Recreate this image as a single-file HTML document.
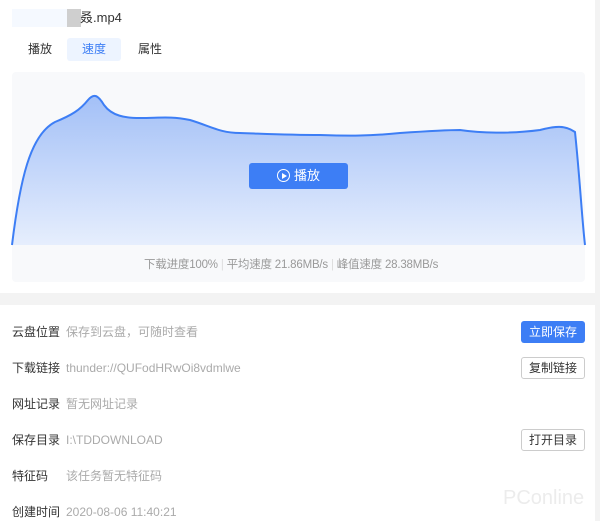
<!DOCTYPE html>
<html><head><meta charset="utf-8"><style>
body{margin:0;width:600px;height:521px;background:#f3f3f3;font-family:"Liberation Sans","Noto Sans CJK SC",sans-serif;overflow:hidden;position:relative}
.top{position:absolute;left:0;top:0;width:595px;height:293px;background:#fff}
.bot{position:absolute;left:0;top:305px;width:595px;height:216px;background:#fff}
.t{position:absolute;font-size:12px;white-space:nowrap;line-height:14px}
.btn{position:absolute;font-size:12px;text-align:center;border-radius:3px;box-sizing:border-box}
</style></head><body>
<div class="top">
<div style="position:absolute;left:12px;top:9px;width:55px;height:18px;background:#f5f9ff"></div>
<div style="position:absolute;left:67px;top:9px;width:14px;height:18px;background:#cfcfcf"></div>
<div class="t" style="left:80px;top:11px;color:#333;font-size:13px">叒.mp4</div>
<div class="t" style="left:28px;top:42px;color:#333">播放</div>
<div style="position:absolute;left:67px;top:38px;width:54px;height:23px;background:#edf4ff;border-radius:3px"></div>
<div class="t" style="left:82px;top:42px;color:#3d7ef5">速度</div>
<div class="t" style="left:138px;top:42px;color:#333">属性</div>
<div style="position:absolute;left:12px;top:72px;width:573px;height:210px;background:#f8f9fb;border-radius:4px"></div>
<svg style="position:absolute;left:0;top:0" width="600" height="293">
<defs><linearGradient id="g" x1="0" y1="0" x2="0" y2="1"><stop offset="0" stop-color="#a3c0f7"/><stop offset="1" stop-color="#e6eefd"/></linearGradient></defs>
<path d="M12,245 C20,180 30,135 55,122 C72,115 80,110 88,100 C94,93 98,95 104,105 C112,116 125,118 140,118 C160,118 170,116 190,120 C210,126 220,133 240,133 C270,134 290,135 320,135 C350,136 370,136 400,133 C430,131 445,130 460,130 C480,133 510,134 540,130 C555,126 565,125 575,132 C580,180 582,220 585,245 Z" fill="url(#g)" stroke="none"/>
<path d="M12,245 C20,180 30,135 55,122 C72,115 80,110 88,100 C94,93 98,95 104,105 C112,116 125,118 140,118 C160,118 170,116 190,120 C210,126 220,133 240,133 C270,134 290,135 320,135 C350,136 370,136 400,133 C430,131 445,130 460,130 C480,133 510,134 540,130 C555,126 565,125 575,132 C580,180 582,220 585,245" fill="none" stroke="#3d7ef5" stroke-width="2"/>
</svg>
<div class="btn" style="left:249px;top:163px;width:99px;height:26px;background:#3d7ef5;color:#fff;line-height:26px;font-size:13px"><span style="display:inline-block;width:11px;height:11px;border:1.5px solid #fff;border-radius:50%;vertical-align:-2px;margin-right:4px;position:relative"><span style="position:absolute;left:4px;top:2.5px;border-left:5px solid #fff;border-top:3px solid transparent;border-bottom:3px solid transparent"></span></span>播放</div>
<div class="t" style="left:144px;top:258px;color:#999;font-size:11.5px;letter-spacing:-0.2px">下载进度100% <span style="color:#ddd">|</span> 平均速度 21.86MB/s <span style="color:#ddd">|</span> 峰值速度 28.38MB/s</div>
</div>
<div class="bot"></div>
<div class="t" style="left:12px;top:325px;color:#333">云盘位置</div><div class="t" style="left:66px;top:325px;color:#aaa">保存到云盘，可随时查看</div>
<div class="btn" style="left:521px;top:321px;width:64px;height:22px;background:#3d7ef5;color:#fff;line-height:22px">立即保存</div>
<div class="t" style="left:12px;top:361px;color:#333">下载链接</div><div class="t" style="left:66px;top:361px;color:#aaa">thunder://QUFodHRwOi8vdmlwe</div>
<div class="btn" style="left:521px;top:357px;width:64px;height:22px;border:1px solid #ccc;color:#333;line-height:20px">复制链接</div>
<div class="t" style="left:12px;top:397px;color:#333">网址记录</div><div class="t" style="left:66px;top:397px;color:#aaa">暂无网址记录</div>
<div class="t" style="left:12px;top:433px;color:#333">保存目录</div><div class="t" style="left:66px;top:433px;color:#aaa">I:\TDDOWNLOAD</div>
<div class="btn" style="left:521px;top:429px;width:64px;height:22px;border:1px solid #ccc;color:#333;line-height:20px">打开目录</div>
<div class="t" style="left:12px;top:469px;color:#333">特征码</div><div class="t" style="left:66px;top:469px;color:#aaa">该任务暂无特征码</div>
<div class="t" style="left:12px;top:505px;color:#333">创建时间</div><div class="t" style="left:66px;top:505px;color:#aaa">2020-08-06 11:40:21</div>
<div class="t" style="left:503px;top:487px;color:#ececec;font-size:20px;line-height:22px">PConline</div>
</body></html>
